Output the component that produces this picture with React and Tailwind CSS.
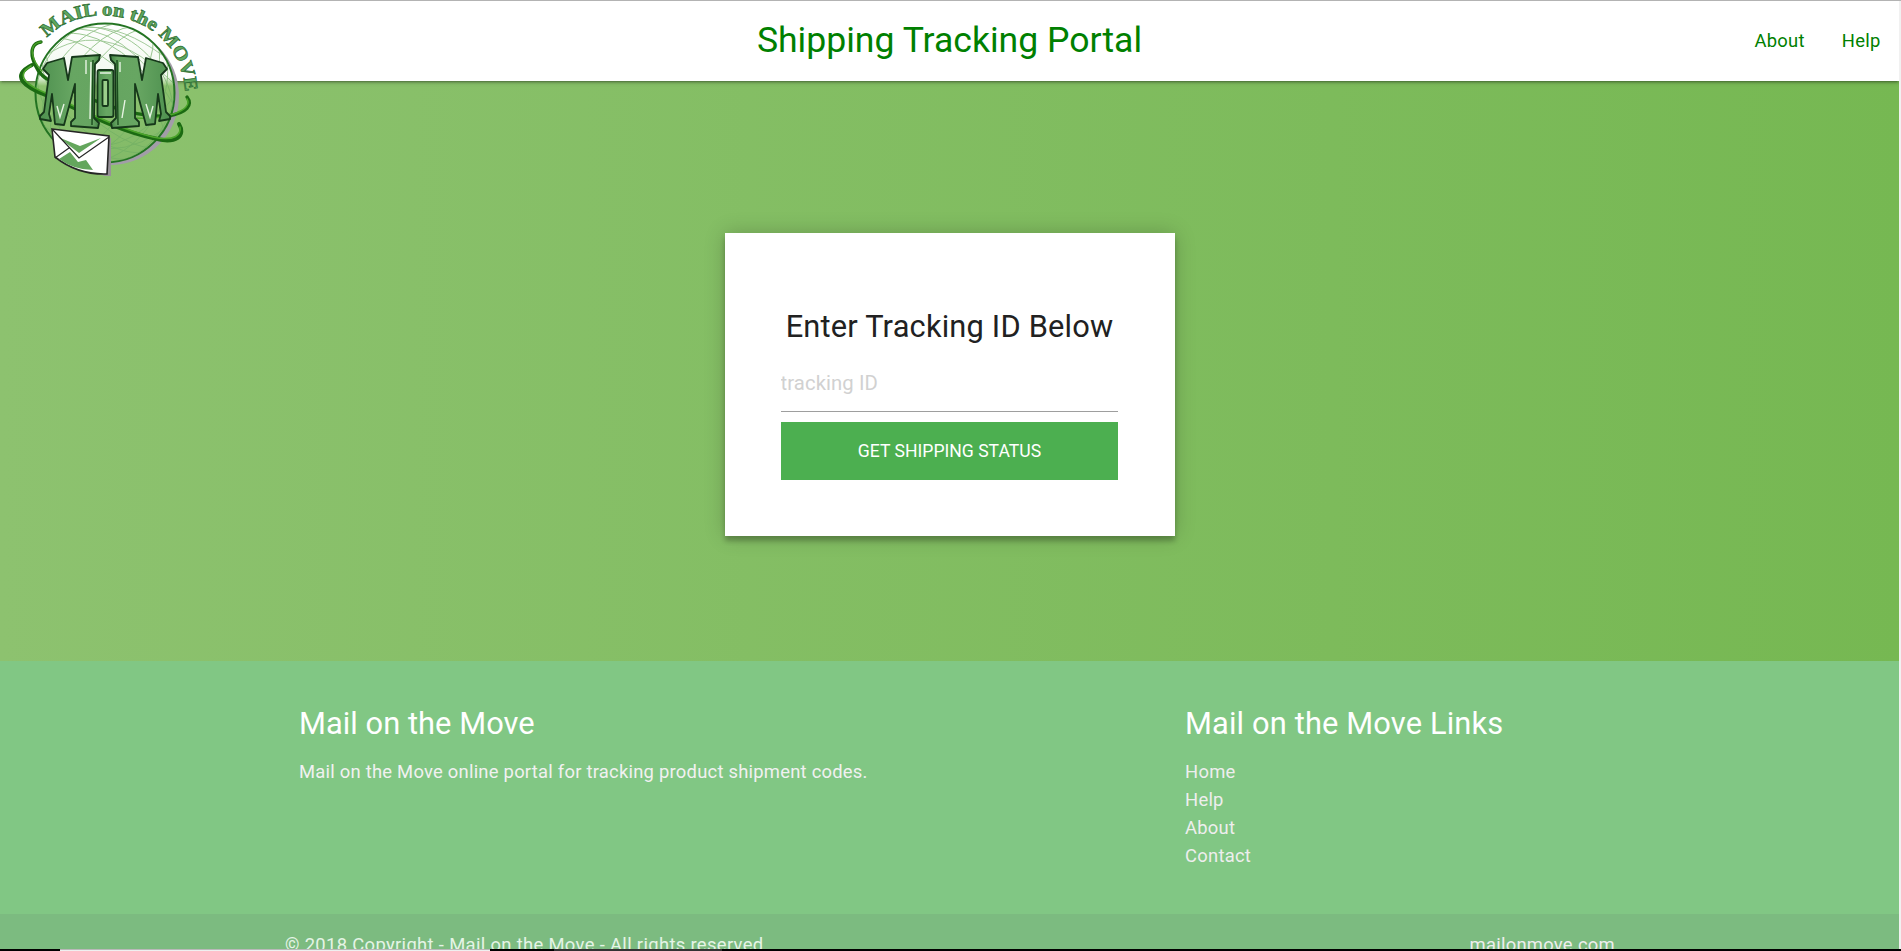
const NAV = ['About', 'Help'];
const LINKS = ['Home', 'Help', 'About', 'Contact'];

const LETTER_M =
  'M43 69 L47 63 L64 58 L68 80 L72 57 L100 55 L99 60 L95 64 L94 118 L99 123 L98 128 L71 126 L71 122 L75 118 L75 84 L64 125 L55 124 L52 94 L49 114 L51 121 L40 119 L40 116 L44 112 L49 75 Z';

function Logo() {
  return (
    <svg className="absolute left-0 top-0 z-20 h-[190px] w-[220px]" viewBox="0 0 220 190" aria-hidden="true">
      <defs>
        <linearGradient id="globe" x1="0" y1="0" x2="0" y2="1">
          <stop offset="0" stopColor="#fff" />
          <stop offset="0.38" stopColor="#f2f8ef" />
          <stop offset="0.45" stopColor="#8dc26f" />
          <stop offset="1" stopColor="#82ba68" />
        </linearGradient>
        <linearGradient id="metal" x1="0" y1="0" x2="1" y2="0">
          <stop offset="0" stopColor="#4f9150" />
          <stop offset="0.55" stopColor="#67a662" />
          <stop offset="0.88" stopColor="#66a561" />
          <stop offset="1" stopColor="#3f8042" />
        </linearGradient>
        <clipPath id="ball"><circle cx="105" cy="93" r="69" /></clipPath>
        <path id="arc" d="M47 38 C62 21 84 15.5 105 15.5 C151 17 184 50 185 94" />
      </defs>
      <circle cx="110" cy="96" r="69" fill="#a29da8" />
      <circle cx="105" cy="93" r="69.5" fill="url(#globe)" stroke="#237322" strokeWidth="2" />
      <g clipPath="url(#ball)" fill="none" stroke="#6fae63" strokeWidth="0.9" opacity="0.7">
        <ellipse cx="105" cy="93" rx="25" ry="76" transform="rotate(35 105 93)" />
        <ellipse cx="105" cy="93" rx="40" ry="76" transform="rotate(35 105 93)" />
        <ellipse cx="105" cy="93" rx="55" ry="76" transform="rotate(35 105 93)" />
        <ellipse cx="105" cy="93" rx="67" ry="76" transform="rotate(35 105 93)" />
        <ellipse cx="105" cy="93" rx="27" ry="76" transform="rotate(-48 105 93)" />
        <ellipse cx="105" cy="93" rx="42" ry="76" transform="rotate(-48 105 93)" />
        <ellipse cx="105" cy="93" rx="57" ry="76" transform="rotate(-48 105 93)" />
        <path d="M35 55 Q90 -5 175 65 M34 65 Q100 5 180 90 M60 30 Q125 18 178 112 M35 120 Q110 178 175 120 M55 141 Q125 165 172 99" />
      </g>
      <g fill="none" strokeLinecap="round">
        <path d="M41 42 C24 44 34 72 47 79 C88 99 133 119 168 116 C187 113 193 105 187 97" stroke="#1b6a12" strokeWidth="3.4" />
        <path d="M41 42 C26 44 33 62 42 71" stroke="#469d27" strokeWidth="1.5" />
        <path d="M32 65 C10 76 24 87 48 96 C80 110 115 130 153 138 C177 145 186 135 179 124" stroke="#1b6a12" strokeWidth="4" />
        <path d="M31 66 C14 76 28 86 48 94 C80 108 115 128 153 137 C176 142 181 134 180 127" stroke="#4ca52b" strokeWidth="1.6" />
        <path d="M135 118 C163 120 194 111 187 99" stroke="#4ca52b" strokeWidth="1.5" />
      </g>
      <g stroke="#16381a" strokeWidth="1.8" strokeLinejoin="round" fill="url(#metal)">
        <path d={LETTER_M} />
        <path d={LETTER_M} transform="matrix(-1 0 0 1 210 0)" />
        <rect x="97.5" y="70" width="16" height="47" rx="2" />
        <rect x="102.5" y="80" width="5.5" height="26" rx="1" fill="#9ccf8c" />
      </g>
      <g fill="none" stroke="#e7f4e3" strokeWidth="1.4">
        <path d="M91 62 L90 119 M57 106 L60 117 L64 104 M86 60 L86 74 M120 62 L120 72 M122 118 L125 100 M146 104 L150 117 L153 106 M100 73 L111 73" />
      </g>
      <g fill="none" stroke="#194b1c" strokeWidth="1.4">
        <path d="M93 60 L92 125 M117 60 L118 125" />
      </g>
      <path d="M55 132 L111 138 L111 176 L105 176 L63 162 Z" fill="#989199" />
      <path d="M52 129 L109 136 L107 174 Q78 175 55 157 Z" fill="#fff" stroke="#252525" strokeWidth="1.6" />
      <path d="M58 137 L79 153 L101 138 L80 146 Z M70 152 L59 159 Q74 170 93 170 L86 160 L78 162 Z" fill="#64a65d" />
      <path d="M53 130 L79 158 L109 137 M69 148 L55 158" fill="none" stroke="#252525" strokeWidth="1.2" />
      <text
        fontFamily="Liberation Serif, serif"
        fontWeight="700"
        fontSize="19"
        fill="#5fa85f"
        stroke="#2e6f33"
        strokeWidth="0.7"
      >
        <textPath href="#arc" textLength="186" lengthAdjust="spacingAndGlyphs">MAIL on the MOVE</textPath>
      </text>
    </svg>
  );
}

export default function App() {
  return (
    <div className="relative flex h-[951px] w-full flex-col overflow-hidden bg-[#f1f1f1] font-['Roboto',sans-serif] text-[18.4px] leading-[28px]">
      <div className="h-px shrink-0 bg-[#b3b3b3]" />
      <div className="mr-[2px] flex h-[948px] shrink-0 flex-col overflow-hidden">
        <header className="relative z-10 grid h-20 shrink-0 grid-cols-[1fr_auto_1fr] items-center bg-white pb-0.5 text-[#008000] shadow-[0_2px_2px_0_rgba(0,0,0,0.14),0_3px_1px_-2px_rgba(0,0,0,0.12),0_1px_5px_0_rgba(0,0,0,0.2)]">
          <span />
          <h1 className="text-[35.6px] leading-[78px]">Shipping Tracking Portal</h1>
          <nav className="flex justify-end pt-px tracking-[0.26px]">
            {NAV.map((item) => (
              <a key={item} className="px-[18.5px]">{item}</a>
            ))}
          </nav>
        </header>

        <main className="flex h-[580px] shrink-0 justify-center bg-linear-to-r from-[#8dc26f] to-[#76b852] pt-[152px]">
          <form className="flex h-[303px] w-[450px] flex-col bg-white pl-14 pr-[57px] pt-[74px] shadow-[0_0_20px_0_rgba(0,0,0,0.2),0_5px_5px_0_rgba(0,0,0,0.24)]">
            <h2 className="pl-px text-center whitespace-nowrap text-[30.8px] leading-[40px] tracking-[0.19px] text-[#212121]">Enter Tracking ID Below</h2>
            <input
              placeholder="tracking ID"
              className="mt-[10px] h-[55px] w-full border-b border-[#9e9e9e] pb-0.5 text-[20.3px] tracking-[0.1px] outline-none placeholder:text-[#d1d1d1]"
            />
            <button type="button" className="mt-[10px] h-[58px] w-full bg-[#4caf50] pl-px text-[17.6px] uppercase text-white">
              Get Shipping Status
            </button>
          </form>
        </main>

        <footer className="flex shrink-0 flex-col bg-[#81c784] text-[#f1f1f1]">
          <div className="flex h-[253px] pl-[299px] pt-[43px]">
            <section className="w-[886px]">
              <h3 className="text-[30.8px] leading-[40px] tracking-[0.06px] text-white">Mail on the Move</h3>
              <p className="mt-[14px] tracking-[0.24px]">Mail on the Move online portal for tracking product shipment codes.</p>
            </section>
            <section>
              <h3 className="text-[30.8px] leading-[40px] tracking-[0.15px] text-white">Mail on the Move Links</h3>
              <ul className="mt-[14px] tracking-[0.26px] text-[#eeeeee]">
                {LINKS.map((item) => (
                  <li key={item} className="h-7">{item}</li>
                ))}
              </ul>
            </section>
          </div>
          <div className="flex h-[60px] justify-between bg-[#7cbb80] pl-[285px] pr-[284px] pt-[17px] tracking-[0.34px] text-[#e5f4e6]">
            <span>© 2018 Copyright - Mail on the Move - All rights reserved</span>
            <a className="tracking-[0.26px] text-[#eeeeee]">mailonmove.com</a>
          </div>
        </footer>
      </div>
      <div className="flex h-[2px] shrink-0 bg-black">
        <div className="ml-[60px] h-[2px] w-[430px] border-t border-[#b9b9b9] bg-[#efefef]" />
        <div className="ml-16 h-[2px] w-[168px] bg-[#333333]" />
      </div>
      <Logo />
    </div>
  );
}
